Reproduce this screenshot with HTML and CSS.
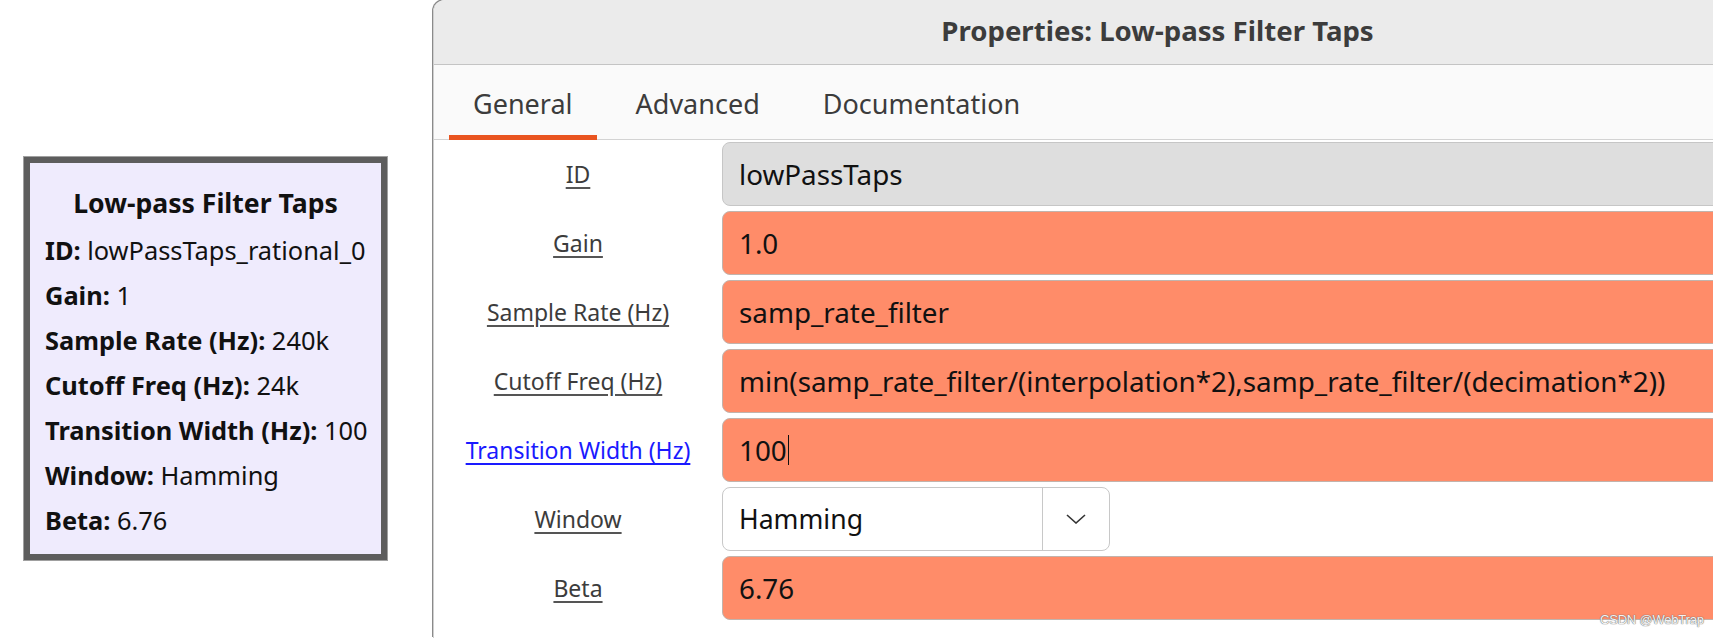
FILE: index.html
```html
<html>
    <head>
        <meta charset="UTF-8">
        <link rel="stylesheet" href="styles.css">
    </head>
    <body>
        <div class="canvas">
            <div class="block">
                <p class="block-title">Low-pass Filter Taps</p>
                <p><b>ID:</b> lowPassTaps_rational_0</p>
                <p><b>Gain:</b> 1</p>
                <p><b>Sample Rate (Hz):</b> 240k</p>
                <p><b>Cutoff Freq (Hz):</b> 24k</p>
                <p><b>Transition Width (Hz):</b> 100</p>
                <p><b>Window:</b> Hamming</p>
                <p><b>Beta:</b> 6.76</p>
            </div>
        </div>

        <div class="dialog">
            <div class="titlebar">Properties: Low-pass Filter Taps</div>

            <div class="tabs">
                <span class="tab active">General</span>
                <span class="tab">Advanced</span>
                <span class="tab">Documentation</span>
            </div>

            <div class="props">
                <span class="label">ID</span>
                <div class="field disabled">lowPassTaps</div>

                <span class="label">Gain</span>
                <div class="field">1.0</div>

                <span class="label">Sample Rate (Hz)</span>
                <div class="field">samp_rate_filter</div>

                <span class="label">Cutoff Freq (Hz)</span>
                <div class="field">min(samp_rate_filter/(interpolation*2),samp_rate_filter/(decimation*2))</div>

                <span class="label link">Transition Width (Hz)</span>
                <div class="field"><span class="caret">100</span></div>

                <span class="label">Window</span>
                <div class="combo">
                    <span class="combo-text">Hamming</span>
                    <span class="combo-btn">
                        <svg width="20" height="10" viewBox="0 0 20 10">
                            <path d="M1 1 L10 9 L19 1" fill="none" stroke="#333" stroke-width="1.6"/>
                        </svg>
                    </span>
                </div>

                <span class="label">Beta</span>
                <div class="field">6.76</div>
            </div>
        </div>

        <span class="watermark">CSDN @WebTrap</span>
    </body>
</html>
```

FILE: styles.css
```css
html, body {
    margin: 0;
    width: 1713px;
    height: 638px;
    overflow: hidden;
    background: white;
}

body {
    display: flex;
    font-family: "Noto Sans", sans-serif;
}

/* flowgraph block on the left */
.canvas {
    width: 433px;
    flex-shrink: 0;
    padding: 157px 0 0 24px;
    box-sizing: border-box;
}

.block {
    width: 363px;
    height: 403px;
    box-sizing: border-box;
    background: #efebfd;
    border: 6px solid #5d5d5d;
    box-shadow: 0 0 0 1px #a0a0a0;
    padding: 18px 0 0 15px;
    font-size: 25.4px;
    color: #111;
}

.block p {
    margin: 0;
    line-height: 45px;
    white-space: nowrap;
}

.block .block-title {
    font-size: 26.6px;
    font-weight: bold;
    text-align: center;
    padding-right: 15px;
    margin-bottom: 2px;
}

/* properties dialog, the window runs on past the right edge */
.dialog {
    flex: 1;
    min-width: 0;
    border-left: 1px solid #cfcfcf;
    border-top-left-radius: 12px;
    box-shadow: -1px -1px 0 #8a8a8a;
    overflow: hidden;
}

.titlebar {
    height: 65px;
    box-sizing: border-box;
    background: #ebebeb;
    border-bottom: 1px solid #c4c4c4;
    display: flex;
    align-items: center;
    justify-content: center;
    padding: 0 0 5px 168px;
    font-size: 27.6px;
    font-weight: bold;
    color: #3c3c3c;
    white-space: nowrap;
}

.tabs {
    height: 75px;
    box-sizing: border-box;
    background: #fafafa;
    border-bottom: 1px solid #d3d3d3;
    display: flex;
    gap: 15px;
    padding-left: 15px;
}

.tab {
    display: flex;
    align-items: center;
    padding: 6px 24px 0 24px;
    border-bottom: 5px solid transparent;
    margin-bottom: -1px;
    font-size: 27px;
    color: #3c3c3c;
}

.tab.active {
    border-bottom-color: #e95420;
}

.props {
    display: grid;
    grid-template-columns: 288px 1fr;
    grid-auto-rows: 64px;
    row-gap: 5px;
    padding: 2px 0 0 0;
}

.label {
    align-self: center;
    justify-self: center;
    font-size: 23px;
    color: #3c3c3c;
    text-decoration: underline;
    text-underline-offset: 4px;
    text-decoration-color: #555;
}

.label.link {
    color: #1a1aff;
    text-decoration-color: #1a1aff;
}

.field {
    box-sizing: border-box;
    background: #ff8c69;
    border: 1px solid #c2b3ac;
    border-radius: 8px;
    margin-right: -20px;
    display: flex;
    align-items: center;
    padding-left: 16px;
    font-size: 27.8px;
    color: #111;
    white-space: nowrap;
    overflow: hidden;
}

.field.disabled {
    background: #dedede;
    border-color: #c6c6c6;
}

.caret {
    border-right: 1px solid #111;
    padding-right: 1px;
    line-height: 30px;
}

.combo {
    width: 388px;
    box-sizing: border-box;
    background: white;
    border: 1px solid #c8c8c8;
    border-radius: 8px;
    display: flex;
    font-size: 26.6px;
    color: #111;
}

.combo-text {
    flex: 1;
    display: flex;
    align-items: center;
    padding-left: 16px;
}

.combo-btn {
    width: 66px;
    border-left: 1px solid #c8c8c8;
    display: flex;
    align-items: center;
    justify-content: center;
}

.watermark {
    position: absolute;
    left: 1600px;
    top: 612px;
    white-space: nowrap;
    font-family: "Liberation Sans", sans-serif;
    font-size: 13px;
    letter-spacing: -0.2px;
    color: #f4f4f4;
    text-shadow: 0 0 1px #666, 0 0 1px #666;
}
```
